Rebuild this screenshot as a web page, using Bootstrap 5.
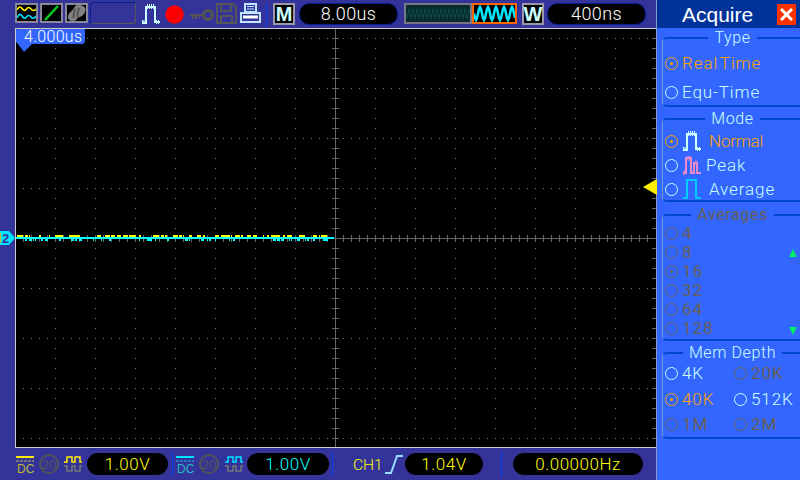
<!DOCTYPE html>
<html lang="en">
<head>
  <meta charset="UTF-8" />
  <title>Oscilloscope - Acquire</title>
  <link rel="stylesheet" href="https://cdn.jsdelivr.net/npm/bootstrap@5.3.0/dist/css/bootstrap.min.css">
  <style>
    html, body { margin: 0; width: 800px; height: 480px; overflow: hidden; }
    body { background: #333399; color: #ccffff; font-family: "Roboto", "Liberation Sans", sans-serif; font-weight: 300; font-size: 17px; line-height: 1; }
    svg { display: block; flex: none; }
    .left-col { width: 656px; height: 480px; }

    /* top toolbar */
    .top-bar { height: 28px; padding-top: 3px; padding-left: 15px; }
    .icon-btn { width: 23px; height: 20px; background: #000; border: 2px solid #889; flex: none; margin-right: 2px; }
    .empty-box { width: 46px; height: 22px; margin-top: -1px; border: 1px solid #001f99; border-right-color: #555; border-bottom-color: #555; border-radius: 3px; flex: none; }
    .top-pulse { margin: 1px 0 0 5px; }
    .top-rec { margin: 2px 0 0 4px; }
    .top-key { margin: 6px 0 0 6px; }
    .top-disk { margin-left: 2px; }
    .top-print { margin-left: 3px; }
    .sep-line { width: 1px; height: 26px; background: #0044ee; flex: none; }
    .sep-top { margin-left: 5px; }
    .sep-low { height: 25px; margin-top: -1px; }
    .sep-ch1 { margin-left: 4px; }
    .sep-ch2 { margin-left: 3px; }
    .sep-trig { margin-left: 18px; }
    .letter-btn { width: 22px; height: 22px; background: #000; border: 2px solid #99a; color: #ccffff; font-family: "Liberation Sans", sans-serif; font-weight: 700; font-size: 20px; flex: none; }
    .btn-m { margin-left: 6px; }
    .btn-w { margin-left: 5px; }
    .pill-box { width: 99px; height: 22px; border: 1px solid #001f99; border-radius: 10px; background: #000; color: #fff; font-size: 18px; letter-spacing: .4px; flex: none; }
    .pill-main { margin-left: 4px; }
    .pill-delay { margin-left: 3px; }
    .wave-strip { width: 68px; height: 21px; margin-left: 6px; background: #0a2a2e; border: 2px solid #778; flex: none; }
    .wave-now { width: 45px; height: 21px; background: #000; border: 2px solid #ff6600; flex: none; }

    /* scope screen */
    .scope-box { margin-left: 15px; width: 641px; height: 420px; background: #000; border-top: 1px solid #ccc; border-left: 1px solid #ccc; border-bottom: 1px solid #ccc; position: relative; }
    .time-flag { position: absolute; left: 0; top: 0; }
    .flag-text { position: absolute; left: 8px; top: 0; color: #fff; font-size: 16px; letter-spacing: .3px; line-height: 16px; }
    .trig-mark { position: absolute; left: 627px; top: 150px; }
    .ch-mark { position: absolute; left: -16px; top: 201px; }

    /* channel status bar */
    .bottom-bar { height: 32px; padding-top: 5px; padding-left: 16px; }
    .dc-one { margin-top: 3px; }
    .dc-two { margin: 3px 0 0 3px; }
    .bw-icon { margin: 1px 0 0 5px; }
    .wave-one { margin: 3px 0 0 5px; }
    .wave-two { margin: 3px 0 0 6px; }
    .yellow-text { color: #ffff00; }
    .cyan-text { color: #00ffff; }
    .low-pill { height: 22px; border-radius: 11px; background: #000; font-size: 17px; letter-spacing: .5px; flex: none; }
    .pill-ch1 { width: 81px; margin-left: 5px; }
    .pill-ch2 { width: 82px; margin-left: 4px; }
    .pill-trig { width: 78px; margin-left: 2px; }
    .pill-freq { width: 130px; margin-left: 11px; }
    .trig-src { margin: 5px 0 0 20px; width: 28px; font-size: 15.5px; }
    .trig-edge { margin: 2px 0 0 4px; }

    /* right menu */
    .panel-side { width: 144px; height: 480px; background: #3366ff; border-left: 1px solid #8899cc; }
    .panel-title { height: 28px; background: #003399; color: #fff; font-family: "Liberation Sans", sans-serif; font-weight: 400; font-size: 21px; padding-left: 25px; }
    .close-btn { width: 19px; height: 21px; background: #ff3300; margin-right: 4px; }
    .group-set { border: 0; border-top: 2px solid #0047cc; border-left: 1px solid #6f9ad8; border-bottom: 2px solid #0047cc; border-top-left-radius: 5px; border-bottom-left-radius: 5px; margin: 0 0 0 5px; padding: 0 0 0 2px; min-width: 0; }
    .group-set legend { float: none; width: auto; margin: 0 auto; padding: 0 6px; font-size: 16px; line-height: 16px; letter-spacing: .6px; color: #ccffff; }
    .group-set legend.legend-off { color: #665f55; font-weight: 400; }
    .type-set { margin-top: 2px; height: 77px; }
    .mode-set { margin-top: 4px; height: 91px; }
    .avg-set { margin-top: 5px; height: 134px; position: relative; }
    .mem-set { margin-top: 4px; height: 94px; }
    .opt-row { display: flex; align-items: center; gap: 4px; letter-spacing: .9px; white-space: nowrap; }
    .radio-dot { width: 13px; height: 13px; border: 1px solid currentColor; border-radius: 50%; flex: none; display: flex; align-items: center; justify-content: center; }
    .radio-on::after { content: ""; width: 3px; height: 3px; border-radius: 50%; background: currentColor; }
    .opt-sel { color: #ffa000; }
    .opt-off { color: #665f55; font-weight: 400; }
    .word-tight { word-spacing: -3px; }
    .mode-gap { margin-left: 3px; }
    .normal-text { letter-spacing: -.2px; }
    .type-rows { padding-top: 3px; display: grid; grid-auto-rows: 29px; }
    .mode-rows { padding-top: 2px; display: grid; grid-auto-rows: 24px; }
    .avg-rows { display: grid; grid-auto-rows: 19px; padding-top: 1px; }
    .mem-rows { display: grid; grid-template-columns: 69px 1fr; grid-auto-rows: 25.5px; }
    .arrow-up { position: absolute; right: 3px; top: 26px; }
    .arrow-down { position: absolute; right: 3px; top: 104px; }
  </style>
</head>
<body class="d-flex">
  <div class="left-col d-flex flex-column">
    <!-- top toolbar -->
    <div class="top-bar d-flex align-items-start">
      <div class="icon-btn"><svg width="19" height="16" viewBox="0 0 19 16" fill="none" stroke-width="1.6"><path d="M0 5Q2.500 0 5 3.500T9.500 4T14 4T19 4" stroke="#ffee00"/><path d="M0 13Q2.500 7 5 11T9.500 12T14 12T19 11" stroke="#00e5ff"/></svg></div>
      <div class="icon-btn"><svg width="19" height="16" viewBox="0 0 19 16"><path d="M3 15L16 1" stroke="#00d020" stroke-width="2.500"/></svg></div>
      <div class="icon-btn"><svg width="19" height="16" viewBox="0 0 19 16" fill="#808080"><path d="M1 13C0 8 5 7 7 3S12 -1 16 1 19 7 16 10 12 11 10 14 2 17 1 13Z"/><path d="M8 4L6 13M12 3L10 12" stroke="#555" stroke-width="2"/></svg></div>
      <div class="empty-box"></div>
      <svg class="top-pulse" width="20" height="20" viewBox="0 0 20 20" fill="none" stroke="#ccffff" stroke-width="2"><path d="M1 19H5V3H14V18H19"/><path d="M6.500 0V5M8.500 0V5M10.500 0V5M12.500 0V5M1.500 16V20M3 16V20M15.500 16V20M17.500 16V20" stroke-width="1"/></svg>
      <svg class="top-rec" width="19" height="19" viewBox="0 0 19 19"><circle cx="9.500" cy="9.500" r="9.200" fill="#ff0000"/></svg>
      <svg class="top-key" width="24" height="12" viewBox="0 0 24 12" fill="none" stroke="#555" stroke-width="2"><circle cx="18" cy="6" r="4.500" stroke-width="3"/><path d="M0 6H14M3 6V10M6 6V10M9 6V9"/></svg>
      <svg class="top-disk" width="21" height="21" viewBox="0 0 21 21" fill="none" stroke="#555" stroke-width="2"><path d="M1 1H17L20 4V20H1Z"/><path d="M5 1V8H15V1M5 20V13H16V20"/></svg>
      <svg class="top-print" width="21" height="21" viewBox="0 0 21 21" fill="none" stroke="#bfe6ff" stroke-width="2"><path d="M5 1H16V9H5Z"/><path d="M7 3.500H14M7 6H14" stroke-width="1"/><path d="M1 10H20V19H1Z" fill="#333399"/><path d="M3 14H18" stroke="#fff" stroke-width="3"/></svg>
      <div class="sep-line sep-top"></div>
      <div class="letter-btn btn-m d-flex align-items-center justify-content-center">M</div>
      <div class="pill-box pill-main d-flex align-items-center justify-content-center">8.00us</div>
      <div class="wave-strip"><svg width="64" height="17"><path id="stripWave" fill="none" stroke="#0c4a4c" stroke-width="1"/></svg></div>
      <div class="wave-now"><svg width="41" height="17"><path id="nowWave" fill="none" stroke="#00e5ff" stroke-width="2.500"/></svg></div>
      <div class="letter-btn btn-w d-flex align-items-center justify-content-center">W</div>
      <div class="pill-box pill-delay d-flex align-items-center justify-content-center">400ns</div>
    </div>

    <!-- scope screen -->
    <div class="scope-box">
      <svg id="scopeGrid" width="640" height="418" viewBox="16 29 640 418" shape-rendering="crispEdges"></svg>
      <svg class="time-flag" viewBox="0 0 70 24" width="70" height="24"><path d="M1 0H69V13L67 15H16L8 23L2 15L0 13V1Z" fill="#3366ff"/></svg>
      <div class="flag-text">4.000us</div>
      <svg class="trig-mark" width="14" height="16" viewBox="0 0 14 16"><path d="M0 8L14 0V16Z" fill="#ffee00"/></svg>
      <svg class="ch-mark" width="16" height="16" viewBox="0 0 16 16"><path d="M0 1H9L15 8L9 15H0Z" fill="#00e5ff"/><path d="M0 3V13" stroke="#bbbb33" stroke-width="2"/><text x="2" y="13" font-size="13" fill="#333399" font-family="Liberation Sans" font-weight="700">2</text></svg>
    </div>

    <!-- channel status bar -->
    <div class="bottom-bar d-flex align-items-start">
      <svg class="dc-one" width="18" height="22" viewBox="0 0 18 22"><path d="M0 1H18" stroke="#ffee00" stroke-width="2"/><path d="M0 5H18" stroke="#bbbb33" stroke-dasharray="3 1"/><text x="1" y="17" font-size="12" fill="#bbbb33" font-family="Liberation Sans">DC</text></svg>
      <svg class="bw-icon" width="20" height="20" viewBox="0 0 20 20"><circle cx="10" cy="10" r="9" fill="none" stroke="#555" stroke-width="2"/><text x="2.500" y="14.500" font-size="13" fill="#555" font-family="Liberation Sans">20</text></svg>
      <svg class="wave-one" width="18" height="17" viewBox="0 0 18 17" fill="none" stroke-width="1.500"><path d="M0 6H3V1H8V6H11V1H16V6H18" stroke="#ffee00"/><path d="M0 10H3V15H8V10H11V15H16V10H18" stroke="#777"/></svg>
      <div class="low-pill pill-ch1 yellow-text d-flex align-items-center justify-content-center">1.00V</div>
      <div class="sep-line sep-low sep-ch1"></div>
      <svg class="dc-two" width="18" height="22" viewBox="0 0 18 22"><path d="M0 1H18" stroke="#00e5ff" stroke-width="2"/><path d="M0 5H18" stroke="#22bbcc" stroke-dasharray="3 1"/><text x="1" y="17" font-size="12" fill="#22bbcc" font-family="Liberation Sans">DC</text></svg>
      <svg class="bw-icon" width="20" height="20" viewBox="0 0 20 20"><circle cx="10" cy="10" r="9" fill="none" stroke="#555" stroke-width="2"/><text x="2.500" y="14.500" font-size="13" fill="#555" font-family="Liberation Sans">20</text></svg>
      <svg class="wave-two" width="18" height="17" viewBox="0 0 18 17" fill="none" stroke-width="1.500"><path d="M0 6H3V1H8V6H11V1H16V6H18" stroke="#00e5ff"/><path d="M0 10H3V15H8V10H11V15H16V10H18" stroke="#777"/></svg>
      <div class="low-pill pill-ch2 cyan-text d-flex align-items-center justify-content-center">1.00V</div>
      <div class="sep-line sep-low sep-ch2"></div>
      <div class="trig-src yellow-text">CH1</div>
      <svg class="trig-edge" width="18" height="19" viewBox="0 0 18 19" fill="none"><path d="M0 18H6L12 1H18" stroke="#99ddff" stroke-width="2"/></svg>
      <div class="low-pill pill-trig yellow-text d-flex align-items-center justify-content-center">1.04V</div>
      <div class="sep-line sep-low sep-trig"></div>
      <div class="low-pill pill-freq yellow-text d-flex align-items-center justify-content-center">0.00000Hz</div>
    </div>
  </div>

  <!-- right menu -->
  <div class="panel-side">
    <div class="panel-title d-flex align-items-center justify-content-between">
      <span>Acquire</span>
      <div class="close-btn d-flex align-items-center justify-content-center"><svg width="13" height="13" viewBox="0 0 13 13"><path d="M1 1L12 12M12 1L1 12" stroke="#fff" stroke-width="3"/></svg></div>
    </div>

    <fieldset class="group-set type-set">
      <legend>Type</legend>
      <div class="type-rows">
        <div class="opt-row opt-sel word-tight"><span class="radio-dot radio-on"></span>Real Time</div>
        <div class="opt-row"><span class="radio-dot"></span>Equ-Time</div>
      </div>
    </fieldset>

    <fieldset class="group-set mode-set">
      <legend>Mode</legend>
      <div class="mode-rows">
        <div class="opt-row opt-sel"><span class="radio-dot radio-on"></span>
          <svg width="20" height="20" viewBox="0 0 20 20" fill="none" stroke="#ccffff" stroke-width="2"><path d="M1 19H5V3H14V18H19"/><path d="M6.500 0V5M8.500 0V5M10.500 0V5M12.500 0V5M1.500 16V20M3 16V20M15.500 16V20M17.500 16V20" stroke-width="1"/></svg>
          <span class="mode-gap normal-text">Normal</span></div>
        <div class="opt-row"><span class="radio-dot"></span>
          <svg width="20" height="20" viewBox="0 0 20 20" fill="none" stroke="#ee88cc" stroke-width="2"><path d="M1 18H4V3H9V18H12V8H15V18H19"/><path d="M6 1V6M8 1V6M14 5V9M2 15V20" stroke-width="1"/></svg>
          <span>Peak</span></div>
        <div class="opt-row"><span class="radio-dot"></span>
          <svg width="20" height="20" viewBox="0 0 20 20" fill="none" stroke="#00ccff" stroke-width="2"><path d="M1 19H5V1H14V19H19"/></svg>
          <span class="mode-gap">Average</span></div>
      </div>
    </fieldset>

    <fieldset class="group-set avg-set">
      <legend class="legend-off">Averages</legend>
      <div class="avg-rows opt-off">
        <div class="opt-row"><span class="radio-dot"></span>4</div>
        <div class="opt-row"><span class="radio-dot"></span>8</div>
        <div class="opt-row"><span class="radio-dot radio-on"></span>16</div>
        <div class="opt-row"><span class="radio-dot"></span>32</div>
        <div class="opt-row"><span class="radio-dot"></span>64</div>
        <div class="opt-row"><span class="radio-dot"></span>128</div>
      </div>
      <svg class="arrow-up" width="8" height="8" viewBox="0 0 8 8"><path d="M4 0L8 8H0Z" fill="#00ee66"/></svg>
      <svg class="arrow-down" width="8" height="8" viewBox="0 0 8 8"><path d="M4 8L8 0H0Z" fill="#00ee66"/></svg>
    </fieldset>

    <fieldset class="group-set mem-set">
      <legend>Mem Depth</legend>
      <div class="mem-rows">
        <div class="opt-row"><span class="radio-dot"></span>4K</div>
        <div class="opt-row opt-off"><span class="radio-dot"></span>20K</div>
        <div class="opt-row opt-sel"><span class="radio-dot radio-on"></span>40K</div>
        <div class="opt-row"><span class="radio-dot"></span>512K</div>
        <div class="opt-row opt-off"><span class="radio-dot"></span>1M</div>
        <div class="opt-row opt-off"><span class="radio-dot"></span>2M</div>
      </div>
    </fieldset>
  </div>

  <script src="https://cdn.jsdelivr.net/npm/bootstrap@5.3.0/dist/js/bootstrap.bundle.min.js"></script>
  <script>
    // draw graticule and trace in page coordinates
    const svg = document.getElementById("scopeGrid");
    let out = "";
    function box(x, y, w, h, c) {
      out += `<rect x="${x}" y="${y}" width="${w}" height="${h}" fill="${c}"/>`;
    }

    // dotted rows and columns
    for (let y = 38; y <= 438; y += 50) {
      for (let x = 23; x < 650; x += 8) box(x, y, 1, 1, "#777");
    }
    for (let x = 55; x < 650; x += 40) {
      for (let y = 38; y <= 438; y += 10) box(x, y, 1, 1, "#777");
    }

    // centre axes with ticks, plus edge ticks on the right
    box(335, 29, 1, 418, "#666");
    box(16, 238, 640, 1, "#666");
    for (let y = 38; y <= 438; y += 10) {
      box(332, y, 7, 1, "#666");
      box(652, y, 4, 1, "#666");
    }
    for (let x = 23; x < 650; x += 8) box(x, 235, 1, 7, "#666");

    // noisy trace on the left half, seeded so it stays the same
    let seed = 11;
    function rnd() {
      seed = (seed * 16807) % 2147483647;
      return seed / 2147483647;
    }
    for (let x = 17; x < 333; x += 2) {
      if (rnd() < 0.45) box(x, 235, 1 + Math.floor(rnd() * 4), 2, "#ffff00");
      if (rnd() < 0.25) box(x, 239, 1 + Math.floor(rnd() * 3), 2, "#00ffff");
    }
    box(16, 237, 318, 2, "#00ffff");
    svg.innerHTML = out;

    // mini waveforms in the top bar
    function sineDots(w, h, period, amp) {
      let d = "";
      for (let x = 0; x <= w; x++) {
        const y = h / 2 + Math.sin(x / period * Math.PI * 2) * amp;
        d += (x ? "L" : "M") + x + " " + y.toFixed(1);
      }
      return d;
    }
    document.getElementById("stripWave").setAttribute("d", sineDots(64, 17, 4, 5));
    document.getElementById("nowWave").setAttribute("d", sineDots(41, 17, 8, 6.5));
  </script>
</body>
</html>
